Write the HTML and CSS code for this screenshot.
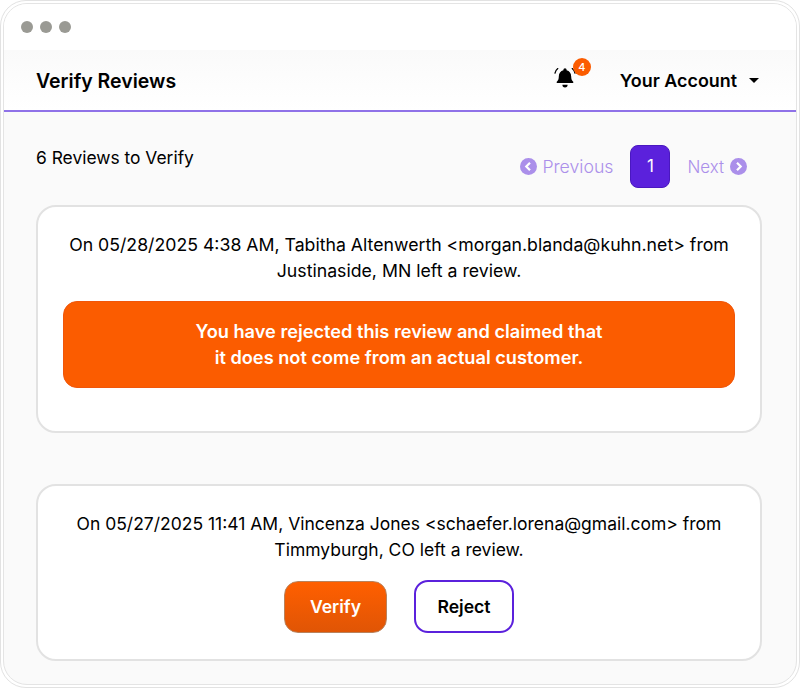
FILE: index.html
```html
<!DOCTYPE html>
<html lang="en">
<head>
<meta charset="utf-8">
<title>Verify Reviews</title>
<link rel="stylesheet" href="styles.css">
</head>
<body>
<div class="outer">
  <div class="window">
    <div class="chrome">
      <span class="dot"></span><span class="dot"></span><span class="dot"></span>
    </div>
    <header class="topbar">
      <h1 class="title">Verify Reviews</h1>
      <div class="bell">
        <svg class="bell-icon" width="24" height="24" viewBox="0 0 24 24" aria-hidden="true">
          <path fill="#000" d="M12 3.2a1.6 1.6 0 0 1 1.6 1.6v.5c2.9.7 4.6 3.2 4.6 6.2 0 2.7.7 4.1 2 5.3.4.4.2 1.2-.5 1.2H4.3c-.7 0-.9-.8-.5-1.2 1.3-1.2 2-2.6 2-5.3 0-3 1.7-5.500 4.600-6.200v-.5A1.600 1.600 0 0 1 12 3.200z"/>
          <path fill="#000" d="M9.400 19.800h5.200a2.600 2.600 0 0 1-5.200 0z"/>
          <path fill="none" stroke="#000" stroke-width="1.300" stroke-linecap="round" d="M4.800 3.600C3.300 4.800 2.400 6.300 2 8.200M19.200 3.600c1.500 1.200 2.400 2.700 2.800 4.600"/>
        </svg>
        <span class="badge">4</span>
      </div>
      <div class="account">Your Account<span class="caret"></span></div>
    </header>
    <main class="content">
      <div class="toolbar">
        <p class="count">6 Reviews to Verify</p>
        <nav class="pager">
          <span class="pager-link">
            <svg width="17" height="17" viewBox="0 0 17 17" aria-hidden="true"><circle cx="8.500" cy="8.500" r="8.500" fill="#ab8fea"/><path d="M10 4.800 6.300 8.500l3.700 3.700" fill="none" stroke="#fff" stroke-width="2.200"/></svg>
            Previous
          </span>
          <span class="page-current">1</span>
          <span class="pager-link pager-next">
            Next
            <svg width="17" height="17" viewBox="0 0 17 17" aria-hidden="true"><circle cx="8.500" cy="8.500" r="8.500" fill="#ab8fea"/><path d="M7 4.800l3.700 3.700L7 12.200" fill="none" stroke="#fff" stroke-width="2.200"/></svg>
          </span>
        </nav>
      </div>
      <section class="card card-rejected">
        <p class="review">On 05/28/2025 4:38 AM, Tabitha Altenwerth &lt;morgan.blanda@kuhn.net&gt; from<br>Justinaside, MN left a review.</p>
        <div class="notice">You have rejected this review and claimed that<br>it does not come from an actual customer.</div>
      </section>
      <section class="card card-pending">
        <p class="review">On 05/27/2025 11:41 AM, Vincenza Jones &lt;schaefer.lorena@gmail.com&gt; from<br>Timmyburgh, CO left a review.</p>
        <div class="actions">
          <button class="btn btn-verify">Verify</button>
          <button class="btn btn-reject">Reject</button>
        </div>
      </section>
    </main>
  </div>
</div>
</body>
</html>
```
FILE: styles.css
```css
* { box-sizing: border-box; }
html, body { margin: 0; padding: 0; background: #fff; }
body {
  width: 800px;
  height: 688px;
  overflow: hidden;
  font-family: Inter, "Open Sans", sans-serif;
  color: #000;
}
.outer {
  width: 800px;
  height: 688px;
  padding: 2px;
  border: 1px solid #e2e2e2;
  border-radius: 26px;
}
.window {
  height: 100%;
  border: 1px solid #e4e4e4;
  border-radius: 24px;
  background: #fafafa;
  overflow: hidden;
}
.chrome {
  height: 46px;
  padding: 17px 17px 0;
  display: flex;
  gap: 7px;
  background: #fff;
}
.dot {
  width: 12px;
  height: 12px;
  border-radius: 50%;
  background: #9a9a94;
}
.topbar {
  height: 62px;
  padding: 1px 37px 0 32px;
  display: flex;
  align-items: center;
  background: linear-gradient(#fafafa, #fff);
  border-bottom: 2px solid #8f72e8;
}
.title {
  margin: 0;
  flex: 1;
  font-size: 19.500px;
  font-weight: 600;
}
.bell {
  position: relative;
  width: 24px;
  height: 24px;
  margin-right: 43px;
  top: -4px;
}
.bell-icon { display: block; }
.badge {
  position: absolute;
  left: 20px;
  top: -7px;
  width: 18px;
  height: 18px;
  border-radius: 50%;
  background: #fb5c00;
  color: #fff;
  font-size: 11px;
  font-weight: 500;
  line-height: 18px;
  text-align: center;
}
.account {
  display: flex;
  align-items: center;
  gap: 12px;
  font-size: 17.900px;
  font-weight: 600;
}
.caret {
  width: 0;
  height: 0;
  border-left: 5.500px solid transparent;
  border-right: 5.500px solid transparent;
  border-top: 5.500px solid #000;
}
.content { padding: 0 34px 0 32px; }
.toolbar {
  height: 93px;
  display: flex;
  justify-content: space-between;
}
.count {
  margin: 34px 0 0;
  font-size: 17.400px;
  line-height: 24px;
}
.pager {
  margin: 33px 15px 0 0;
  height: 43px;
  display: flex;
  align-items: center;
  gap: 17px;
}
.pager-link {
  display: flex;
  align-items: center;
  gap: 5px;
  color: #ab8fea;
  font-size: 17.700px;
  font-weight: 300;
}
.pager-next {
  gap: 6px;
  font-size: 16.900px;
}
.page-current {
  width: 40px;
  height: 43px;
  border-radius: 8px;
  background: #5b21dc;
  border: 1px solid #4a18c0;
  color: #fff;
  font-size: 17px;
  line-height: 41px;
  text-align: center;
}
.card {
  width: 726px;
  border: 2px solid #e2e2e2;
  border-radius: 20px;
  background: #fff;
  padding: 25px 25px 0;
}
.card-rejected { height: 228px; margin-bottom: 51px; }
.card-pending { height: 177px; }
.review {
  margin: 0;
  text-align: center;
  font-size: 17.700px;
  line-height: 26px;
}
.card-pending .review { font-size: 17.500px; }
.notice {
  margin-top: 17px;
  height: 87px;
  padding-bottom: 1px;
  display: flex;
  align-items: center;
  justify-content: center;
  text-align: center;
  border-radius: 14px;
  background: #fb5c00;
  border: 1px solid #f0560a;
  color: #fff;
  font-size: 18.200px;
  font-weight: 600;
  line-height: 26px;
}
.actions {
  margin-top: 17px;
  display: flex;
  justify-content: center;
  align-items: center;
  gap: 27px;
}
.btn {
  font-family: inherit;
  font-size: 17.600px;
  font-weight: 600;
  border-radius: 14px;
}
.btn-verify {
  width: 103px;
  height: 52px;
  border: 1px solid #b9825c;
  color: #fff;
  background: linear-gradient(#ff5f00, #e05505);
}
.btn-reject {
  width: 100px;
  height: 53px;
  border: 2px solid #5b21dc;
  background: #fff;
  color: #000;
}
```
